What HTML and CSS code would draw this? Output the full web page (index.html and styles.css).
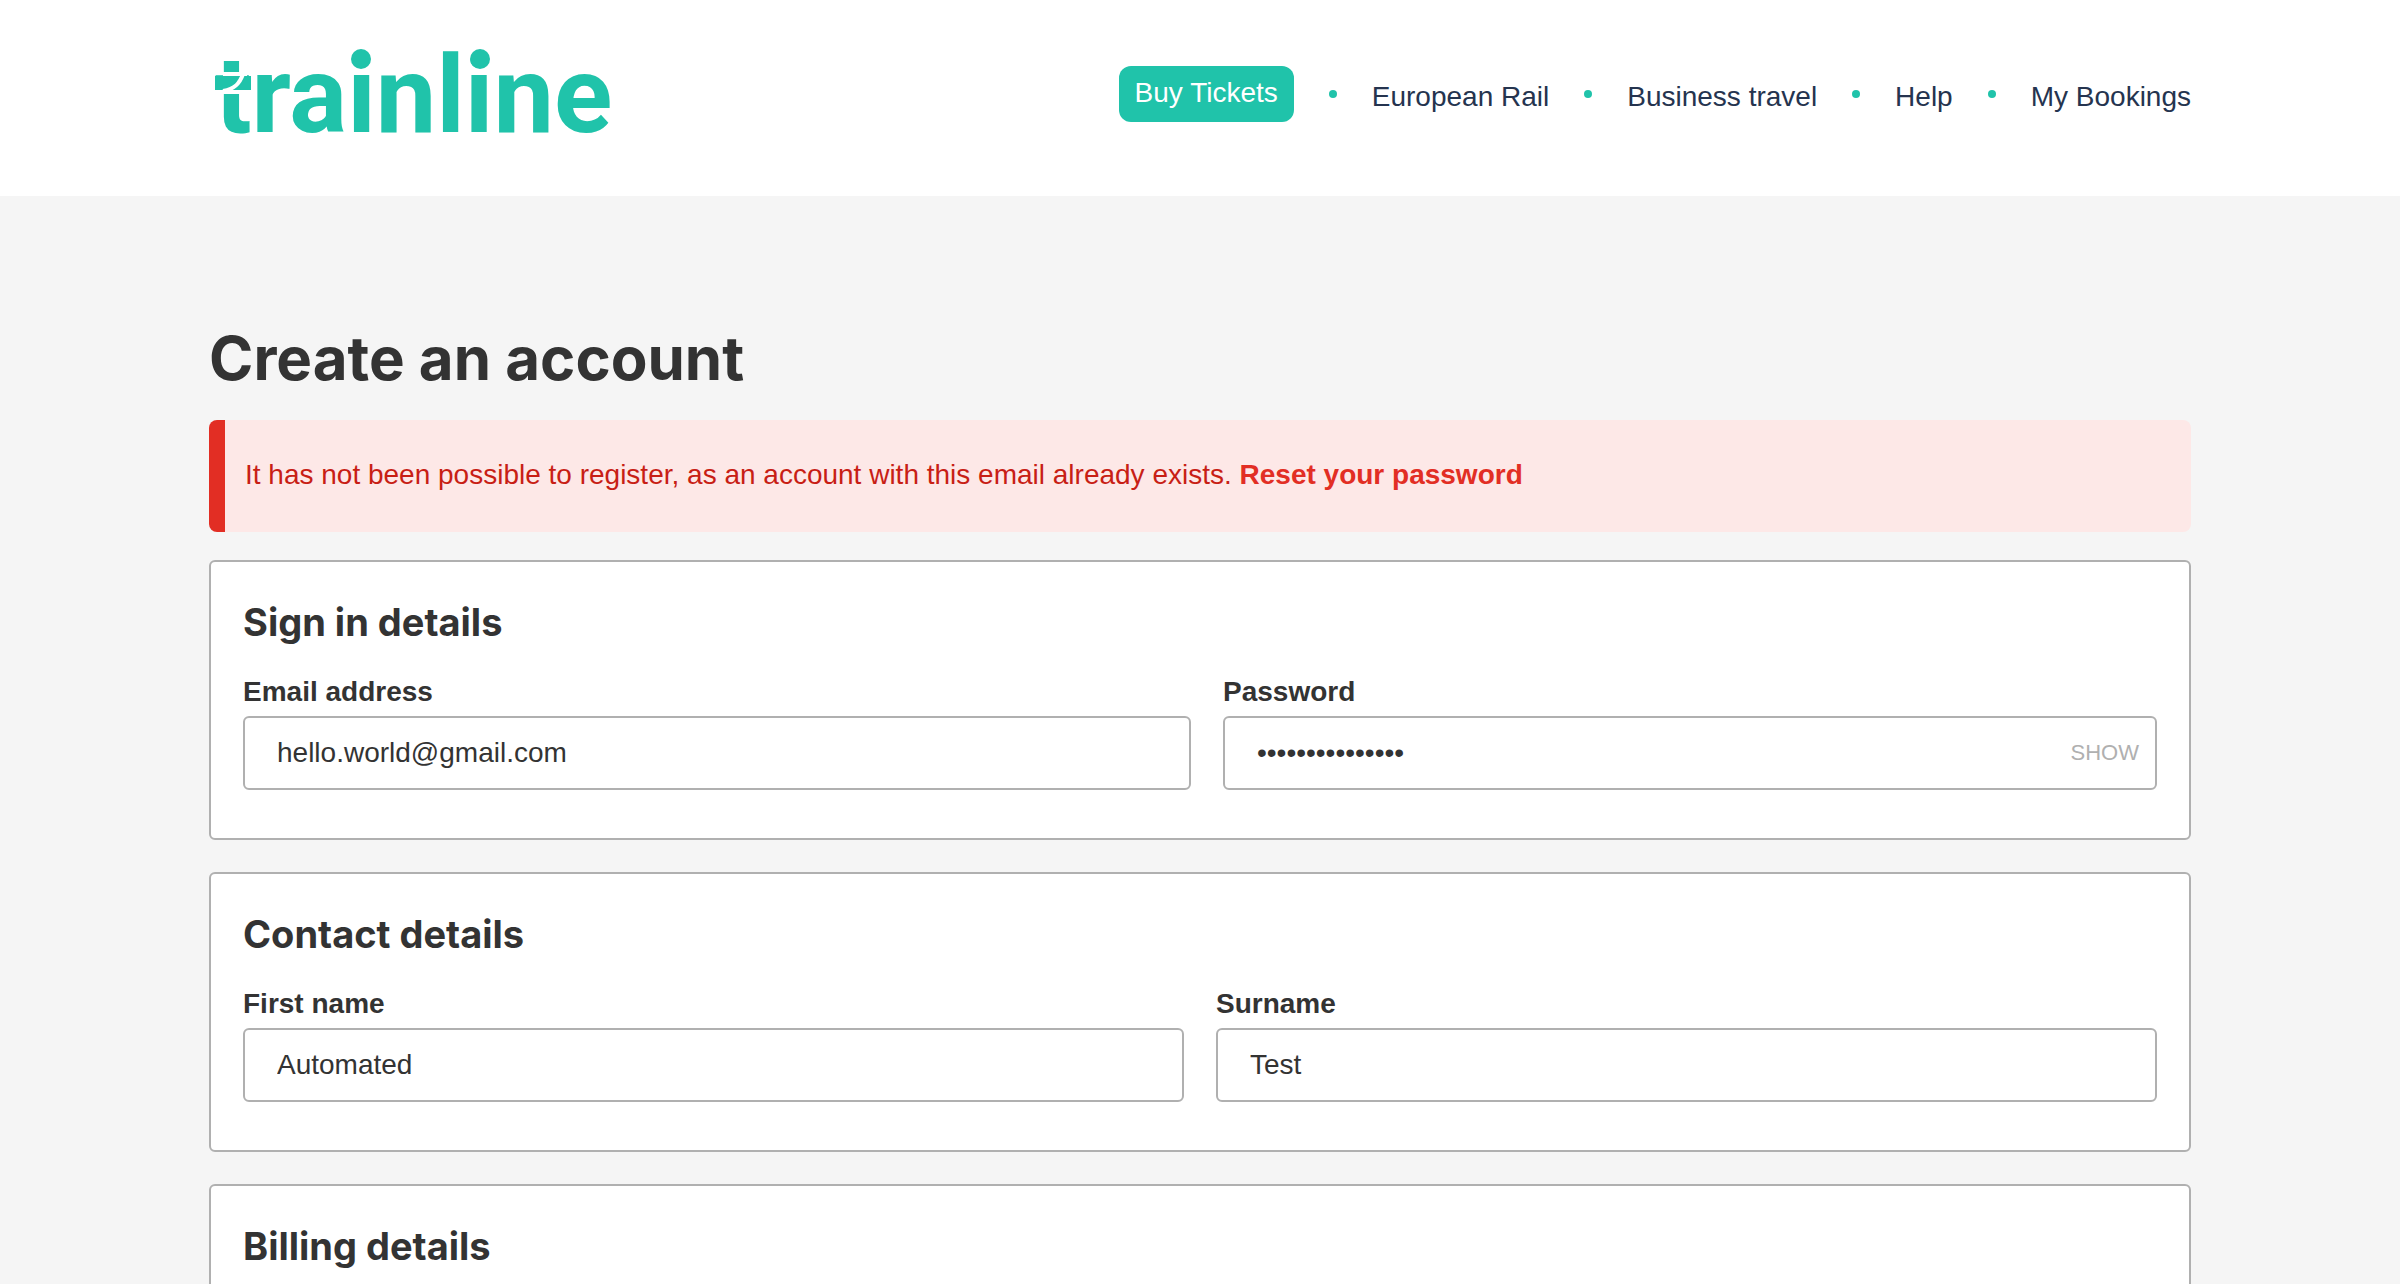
FILE: index.html
```html
<!DOCTYPE html>
<html lang="en">
<head>
  <meta charset="utf-8">
  <meta name="viewport" content="width=device-width, initial-scale=1">
  <title>Create an account</title>
  <link rel="stylesheet" href="styles.css">
</head>
<body>
  <header class="site-header">
    <div class="container site-header__inner">
      <a class="logo" href="#">
        <svg class="logo__art" viewBox="0 -20 420 140" width="420" height="140">
          <text class="logo__word" x="6" y="86">trainline</text>
          <path class="logo__mark" d="M6 30H42V44H6Z"/>
          <circle class="logo__mark" cx="152" cy="13" r="10"/>
          <circle class="logo__mark" cx="271" cy="13" r="10"/>
          <path class="logo__track" d="M14 28H38M8 46H46M34 28C31 37 26 43 14 45"/>
        </svg>
      </a>
      <nav class="nav" aria-label="Main">
        <a class="nav__button" href="#">Buy Tickets</a>
        <span class="nav__dot"></span>
        <a class="nav__link" href="#">European Rail</a>
        <span class="nav__dot"></span>
        <a class="nav__link" href="#">Business travel</a>
        <span class="nav__dot"></span>
        <a class="nav__link" href="#">Help</a>
        <span class="nav__dot"></span>
        <a class="nav__link" href="#">My Bookings</a>
      </nav>
    </div>
  </header>

  <main class="container page">
    <h1 class="page__title">Create an account</h1>
    <p class="alert" role="alert">It has not been possible to register, as an account with this email already exists. <a class="alert__link" href="#">Reset your password</a></p>

    <form class="form">
      <section class="card">
        <h2 class="card__title">Sign in details</h2>
        <div class="card__fields card__fields--sign-in">
          <div class="field">
            <label class="field__label" for="email">Email address</label>
            <div class="field__box">
              <input class="field__input" id="email" type="email" value="hello.world@gmail.com">
            </div>
          </div>
          <div class="field">
            <label class="field__label" for="password">Password</label>
            <div class="field__box">
              <input class="field__input" id="password" type="password" value="automatedtest15">
              <button class="field__toggle" type="button">SHOW</button>
            </div>
          </div>
        </div>
      </section>

      <section class="card">
        <h2 class="card__title">Contact details</h2>
        <div class="card__fields">
          <div class="field">
            <label class="field__label" for="first-name">First name</label>
            <div class="field__box">
              <input class="field__input" id="first-name" type="text" value="Automated">
            </div>
          </div>
          <div class="field">
            <label class="field__label" for="surname">Surname</label>
            <div class="field__box">
              <input class="field__input" id="surname" type="text" value="Test">
            </div>
          </div>
        </div>
      </section>

      <section class="card">
        <h2 class="card__title">Billing details</h2>
      </section>
    </form>
  </main>
</body>
</html>
```
FILE: styles.css
```css
:root {
  --teal: #20c3aa;
  --navy: #25344f;
  --text: #333333;
  --line: #b0b0b0;
  --red: #e22e24;
}

*,
*::before,
*::after {
  box-sizing: border-box;
}

body {
  margin: 0;
  background: #f5f5f5;
  color: var(--text);
  font-family: "Liberation Sans", Arial, sans-serif;
  font-size: 28px;
  line-height: 32px;
}

.container {
  width: 100%;
  max-width: 1982px;
  margin: 0 auto;
}

.site-header {
  background: #ffffff;
}

.site-header__inner {
  display: flex;
  align-items: flex-start;
  justify-content: space-between;
  padding: 26px 0 30px;
}

.logo {
  display: block;
}

.logo__art {
  display: block;
}

.logo__word {
  fill: var(--teal);
  font-family: Roboto, sans-serif;
  font-size: 108px;
  font-weight: 700;
}

.logo__mark {
  fill: var(--teal);
}

.logo__track {
  fill: none;
  stroke: #ffffff;
  stroke-width: 4;
}

.nav {
  display: flex;
  align-items: center;
  gap: 35px;
  padding-top: 40px;
}

.nav__button {
  padding: 11px 16px 13px;
  border-radius: 12px;
  background: var(--teal);
  color: #ffffff;
  text-decoration: none;
}

.nav__link {
  padding-top: 6px;
  color: var(--navy);
  text-decoration: none;
}

.nav__dot {
  width: 8px;
  height: 8px;
  border-radius: 50%;
  background: var(--teal);
}

.page {
  padding: 122px 0 64px;
}

.page__title,
.card__title {
  margin: 0;
  font-family: Inter, sans-serif;
  font-weight: 700;
}

.page__title {
  font-size: 60px;
  line-height: 80px;
}

.alert {
  margin: 22px 0 28px;
  padding: 39px 20px 41px;
  border-left: 16px solid var(--red);
  border-radius: 8px;
  background: #fde8e7;
  color: #c81e15;
}

.alert__link {
  color: var(--red);
  font-weight: 700;
  text-decoration: none;
}

.form {
  display: grid;
  gap: 32px;
}

.card {
  padding: 36px 32px 48px;
  border: 2px solid var(--line);
  border-radius: 6px;
  background: #ffffff;
}

.card__title {
  font-size: 38px;
  line-height: 48px;
}

.card__fields {
  display: grid;
  grid-template-columns: 1fr 1fr;
  gap: 32px;
  margin-top: 30px;
}

.card__fields--sign-in {
  grid-template-columns: 948fr 934fr;
}

.field__label {
  display: block;
  margin-bottom: 8px;
  font-weight: 700;
}

.field__box {
  display: flex;
  align-items: center;
  border: 2px solid var(--line);
  border-radius: 6px;
  background: #ffffff;
}

.field__input {
  flex: 1;
  min-width: 0;
  padding: 19px 32px;
  border: 0;
  outline: 0;
  background: transparent;
  color: inherit;
  font: inherit;
}

.field__toggle {
  padding: 8px 16px;
  border: 0;
  background: transparent;
  color: var(--line);
  font-family: inherit;
  font-size: 22px;
  line-height: 24px;
}
```
